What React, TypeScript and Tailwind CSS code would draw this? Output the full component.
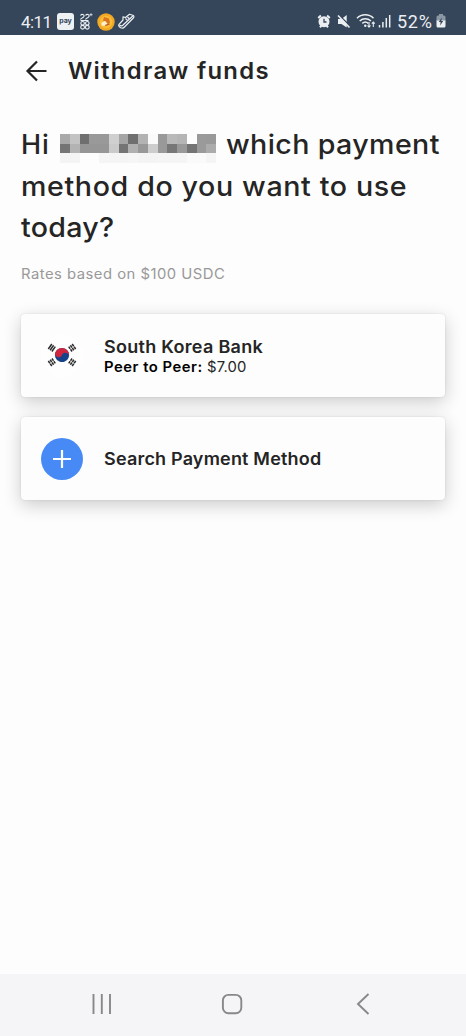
import React from "react";

const mosaic: string[][] = [
  ["#a9a9a9", "#c3c3c3", "#6f6f6f", "#999999", "#999999", "#cfcfcf", "#a5a5a5", "#6f6f6f", "#b3b3b3", "#fafafa", "#999999", "#b9b9b9", "#b5b5b5", "#fdfdfd", "#9a9a9a", "#999999"],
  ["#757575", "#b3b3b3", "#969696", "#969696", "#969696", "#cacaca", "#747474", "#b0b0b0", "#989898", "#cdcdcd", "#999999", "#777777", "#999999", "#747474", "#9a9a9a", "#ababab"],
  ["#f4f4f4", "#f4f4f4", "#fdfdfd", "#fdfdfd", "#f5f5f5", "#f5f5f5", "#f5f5f5", "#f6f6f6", "#f4f4f4", "#f4f4f4", "#f5f5f5", "#f5f5f5", "#f5f5f5", "#fafafa", "#fafafa", "#f5f5f5"],
];

function HiddenName() {
  return (
    <span className="grid h-[29px] w-[156px] grid-cols-16 grid-rows-3">
      {mosaic.flat().map((c, i) => (
        <span key={i} style={{ backgroundColor: c }} />
      ))}
    </span>
  );
}

function StatusBar() {
  return (
    <header className="flex h-[35px] shrink-0 items-start bg-[#35455a] pt-[13px] pl-[21px] text-[#eceff2]">
      <span className="w-[36px] text-[17px] leading-[18px] tracking-[-0.600px] whitespace-nowrap font-['Roboto',sans-serif]">4:11</span>
      <span className="flex h-[17px] w-[17px] items-center justify-center rounded-[3px] bg-[#eef1f4] pb-[1px] text-[7px] font-bold text-[#35455a]">pay</span>
      <svg className="ml-[5px]" width="15" height="17" viewBox="0 0 15 17" fill="none" stroke="currentColor" strokeWidth="1.15">
        <path d="M1.500 2.500c1-1.500 4-1.500 3.500 .8C4.500 5 2 5 1.500 6.500M6.500 2.500c1-1.500 4-1.500 3.500 .8C9.500 5 7 5 6.500 6.500M1.500 7.500h8" />
        <circle cx="3.600" cy="10.300" r="1.800" /><circle cx="8.300" cy="10.300" r="1.800" />
        <circle cx="3.600" cy="14.200" r="1.900" /><circle cx="8.300" cy="14.200" r="1.900" />
        <path d="M12 .2v3M10.500 1.700h3" strokeWidth=".8" />
      </svg>
      <svg className="ml-[3px]" width="18" height="18" viewBox="0 0 18 18">
        <circle cx="9" cy="9" r="8.700" fill="#f3a824" />
        <circle cx="9" cy="9" r="6.300" fill="#f8bd35" />
        <path d="M7 4l5 1.500 1 4-3 3-2-2 1-2-3-1z" fill="#d97522" />
        <path d="M4.500 9.800l3.500-1.800 2.500 2.500-2 2.500-4-.5z" fill="#fff0cf" />
        <path d="M8 12.500l4.500-1.500" stroke="#b95a1c" strokeWidth="1.200" />
      </svg>
      <svg className="ml-[3px]" width="17" height="17" viewBox="0 0 17 17" fill="none" stroke="currentColor" strokeWidth="1.200" strokeLinejoin="round">
        <path d="M1 11.300L5 7V3.800l2.500.7L11.500 1.200l4 1.300c.6.800.5 1.700-.2 2.500L6.500 14c-1 1.200-2.400 1.500-3.800.8C1.200 14 .3 12.700 1 11.300z" />
        <path d="M1.500 12c1.500 1.200 2.800 1 3.800-.2l9.800-9M7.500 5.500l1.800 1.600M9.500 4l1.600 1.500" />
      </svg>

      <svg className="ml-[182px]" width="14" height="16" viewBox="0 0 14 16" fill="none">
        <path d="M1.200 5l2.700-2.400M12.800 5l-2.700-2.400M3 14.300l1.500-1.800M11 14.300l-1.500-1.800" stroke="currentColor" strokeWidth="2" />
        <circle cx="7" cy="8.700" r="5.500" fill="currentColor" />
        <path d="M7 5.700V9h2.500" stroke="#35455a" strokeWidth="1.300" />
      </svg>
      <svg className="ml-[6px]" width="14" height="16" viewBox="0 0 14 16">
        <path d="M1 6h3.500L9.700 2v12.500L4.500 11H1z" fill="currentColor" />
        <path d="M1.500 1.500l13 13" stroke="#35455a" strokeWidth="1.500" />
        <path d="M1 2.500l11.500 12" stroke="currentColor" strokeWidth="1.600" />
      </svg>
      <svg className="ml-[5px]" width="20" height="17" viewBox="0 0 20 17" fill="none" stroke="currentColor" strokeWidth="1.500">
        <path d="M1 5.300c4.500-4.600 12-4.600 16.500 0M3.700 8c3.200-3 8-3 11.200 0M6.300 10.400c1.800-1.600 4.200-1.600 6 0" />
        <circle cx="9.300" cy="12.700" r="1.200" fill="currentColor" stroke="none" />
        <path d="M13 9v5M11.500 12.500l1.500 1.700 1.500-1.700M17.300 14V9M15.800 10.700l1.500-1.700 1.500 1.700" strokeWidth="1.100" />
      </svg>
      <svg className="ml-[2px]" width="14" height="16" viewBox="0 0 14 16" stroke="currentColor" strokeWidth="1.500">
        <path d="M1.500 12v2.500M4.900 9v5.500M8.300 5v9.500M11.700 2v12.500" />
      </svg>
      <span className="ml-[5px] w-[37px] text-[18px] leading-[18px] tracking-[0.700px] whitespace-nowrap font-['Roboto',sans-serif]">52%</span>
      <svg className="ml-[2px] mt-[1px]" width="10" height="15" viewBox="0 0 10 15">
        <path d="M3 0h4v1.500h1q1.500 0 1.500 1.500v4h-9V3Q.5 1.500 2 1.500h1z" fill="#8b97a5" />
        <path d="M.5 6.500h9V12q0 1.500-1.500 1.500H2Q.5 13.500.5 12z" fill="currentColor" />
        <path d="M5.800 3.500L2.800 8h1.800l-.5 3.500L7.200 7H5.300z" fill="#35455a" />
      </svg>
    </header>
  );
}

function KoreaFlag() {
  return (
    <svg width="42" height="42" viewBox="0 0 42 42">
      <circle cx="21" cy="21" r="21" fill="#fefefe" />
      <g transform="translate(21 20)">
        <g transform="rotate(22)">
          <circle r="7.100" fill="#164289" />
          <path d="M-7.100 0A7.100 7.100 0 0 1 7.100 0A3.550 3.550 0 0 0 0 0A3.550 3.550 0 0 1 -7.100 0" fill="#cf2640" />
        </g>
        <g stroke="#2c2c2c" strokeWidth="1.500">
          <path d="M-13.700-6L-10.200-11M-11.900-4.700L-8.400-9.700M-10.100-3.500L-6.700-8.400" />
          <path d="M13.700-6L10.200-11M11.900-4.700L8.400-9.700M10.100-3.500L6.700-8.400" strokeDasharray="2.800 .6" />
          <path d="M-13.700 6L-10.200 11M-11.900 4.700L-8.400 9.700M-10.100 3.500L-6.700 8.400" strokeDasharray="2.800 .6" />
          <path d="M13.700 6L10.200 11M11.900 4.700L8.400 9.700M10.100 3.500L6.700 8.400" strokeDasharray="2.800 .6" />
        </g>
      </g>
    </svg>
  );
}

function Card({ icon, children }: { icon: React.ReactNode; children: React.ReactNode }) {
  return (
    <button className="flex h-[83px] w-full items-center gap-[21px] rounded-[4px] bg-[#fdfdfd] pt-[2px] pl-[20px] text-left shadow-[0_0_2px_rgba(0,0,0,0.12),0_5px_18px_rgba(0,0,0,0.20)]">
      {icon}
      {children}
    </button>
  );
}

export default function App() {
  return (
    <div className="flex h-[1036px] w-[466px] flex-col overflow-hidden bg-[#fdfdfd] font-['Inter',sans-serif] text-[#252525]">
      <StatusBar />
      <div className="flex h-[71px] shrink-0 items-center pl-[25px]">
        <svg width="23" height="22" viewBox="0 0 23 22" fill="none" stroke="#252525" strokeWidth="2.200">
          <path d="M21.500 11H2.500M12 1.500L2.500 11L12 20.500" />
        </svg>
        <h1 className="ml-[20px] origin-left scale-x-[1.06] pt-[1px] text-[22.500px] leading-[26px] font-semibold tracking-[1.200px] whitespace-nowrap">Withdraw funds</h1>
      </div>
      <main className="flex-1 px-[21px] pt-[18px]">
        <h2 className="text-[27px] leading-[41.500px] font-medium whitespace-nowrap">
          <span className="flex h-[41.500px]">
            <span className="w-[39px] tracking-[0.900px]">Hi</span>
            <span className="mt-[10px]"><HiddenName /></span>
            <span className="ml-[10px] origin-left scale-x-[1.06] tracking-[0.350px]">which payment</span>
          </span>
          <span className="block origin-left scale-x-[1.06] tracking-[0.580px]">method do you want to use</span>
          <span className="block origin-left scale-x-[1.06] tracking-[0.250px]">today?</span>
        </h2>
        <p className="mt-[15px] origin-left scale-x-[1.06] text-[14px] leading-[20px] tracking-[0.450px] whitespace-nowrap text-[#999]">Rates based on $100 USDC</p>
        <div className="mt-[30px] flex w-[424px] flex-col gap-[20px]">
          <Card icon={<KoreaFlag />}>
            <span className="flex origin-left scale-x-[1.06] flex-col whitespace-nowrap">
              <span className="text-[17px] leading-[20px] font-semibold tracking-[0.260px]">South Korea Bank</span>
              <span className="text-[14px] leading-[19px] tracking-[0.150px]"><b className="font-semibold tracking-[0.480px] text-black">Peer to Peer:</b> $7.00</span>
            </span>
          </Card>
          <Card icon={
            <span className="flex h-[42px] w-[42px] items-center justify-center rounded-full bg-[#478af5]">
              <svg width="20" height="20" viewBox="0 0 20 20" stroke="#fdfdfd" strokeWidth="2.200"><path d="M10 1v18M1 10h18" /></svg>
            </span>
          }>
            <span className="origin-left scale-x-[1.06] text-[17px] leading-[21px] font-semibold tracking-[0.170px] whitespace-nowrap">Search Payment Method</span>
          </Card>
        </div>
      </main>
      <nav className="flex h-[62px] shrink-0 items-center bg-[#f5f5f7] pb-[3px] pl-[92px] text-[#888]">
        <svg width="20" height="20" viewBox="0 0 20 20" stroke="currentColor" strokeWidth="1.900"><path d="M1.500 0v20M9.800 0v20M18 0v20" /></svg>
        <svg className="ml-[109px]" width="22" height="22" viewBox="0 0 22 22" fill="none" stroke="currentColor" strokeWidth="1.900"><rect x="1.900" y="1.900" width="18.400" height="18.400" rx="5.500" /></svg>
        <svg className="ml-[113px]" width="14" height="22" viewBox="0 0 14 22" fill="none" stroke="currentColor" strokeWidth="1.900"><path d="M12.500 1L2 11L12.500 21" /></svg>
      </nav>
    </div>
  );
}
